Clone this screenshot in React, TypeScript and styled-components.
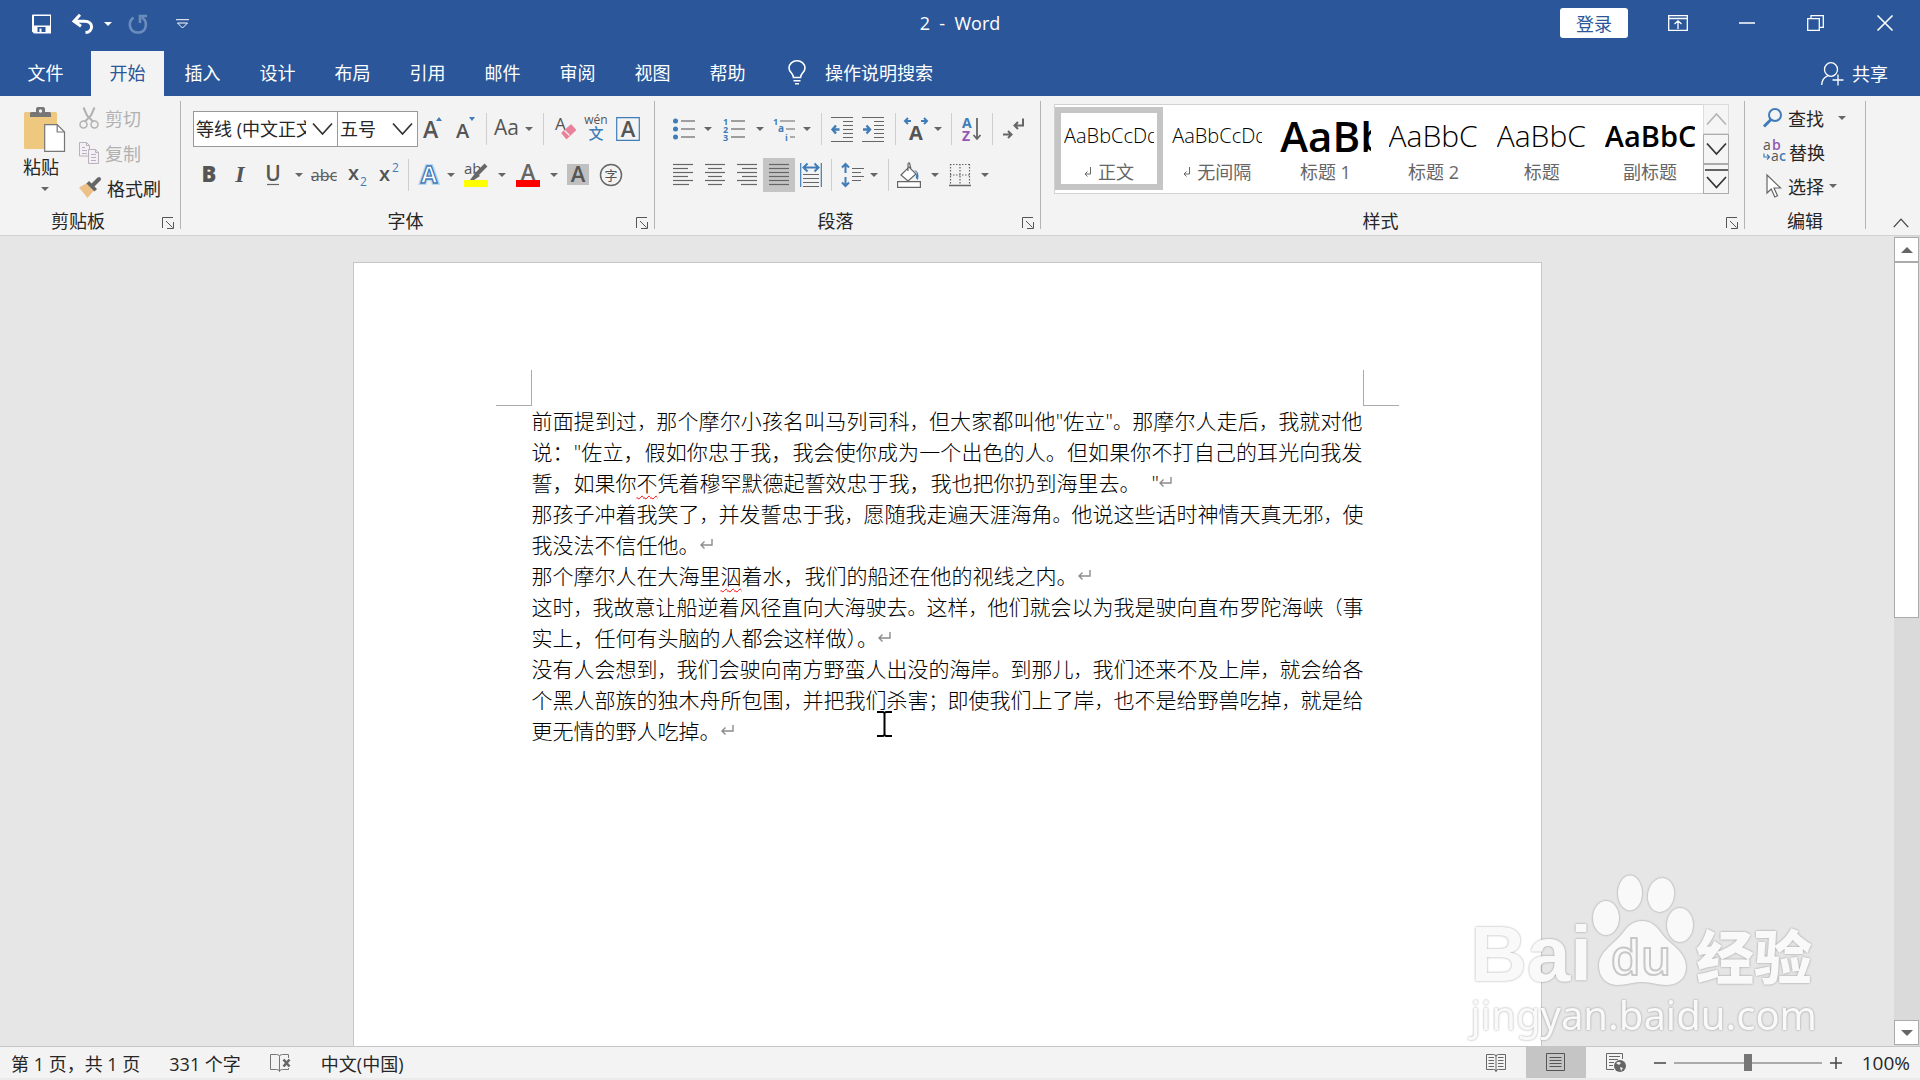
import React from "react";
import styled, { createGlobalStyle } from "styled-components";

const UI_FONT = '"Open Sans", "Noto Sans CJK SC", sans-serif';
const BLUE = "#2b579a";
const ICON = "#666666";
const ACCENT = "#3f7cb8";

const GlobalStyle = createGlobalStyle`
  * { box-sizing: border-box; }
  body { margin: 0; background: #e6e6e6; font-family: ${UI_FONT}; font-size: 18px; color: #262626; }
  button, input, select { font: inherit; color: inherit; }
  button { border: 0; padding: 0; background: none; display: flex; align-items: center; justify-content: center; white-space: nowrap; }
  svg { display: block; flex: none; overflow: visible; }
`;

const Window = styled.div`
  height: 100vh;
  display: flex;
  flex-direction: column;
  overflow: hidden;
`;

/* ---------- title bar and tabs ---------- */

const TitleBar = styled.header`
  display: grid;
  grid-template-columns: 1fr auto 1fr;
  align-items: center;
  height: 46px;
  flex: none;
  background: ${BLUE};
  color: #fff;
`;

const QuickAccess = styled.div`
  display: flex;
  align-items: center;
  padding: 2px 0 0 22px;
`;

const ToolButton = styled.button<{ $w: number }>`
  width: ${(p) => p.$w}px;
  height: 32px;
`;

const Title = styled.h1`
  margin: 0;
  font-size: 18px;
  font-weight: 400;
  line-height: 24px;
  white-space: pre;
`;

const WindowControls = styled.div`
  display: flex;
  justify-content: flex-end;
  align-items: center;
`;

const SignIn = styled.button`
  width: 68px;
  height: 30px;
  margin-right: 15px;
  border-radius: 3px;
  background: #fff;
  color: ${BLUE};
`;

const TabBar = styled.nav`
  display: flex;
  align-items: flex-end;
  height: 50px;
  flex: none;
  padding-right: 32px;
  background: ${BLUE};
  color: #fff;
`;

const Tab = styled.button<{ $active?: boolean; $file?: boolean }>`
  width: ${(p) => (p.$file ? 87 : 73)}px;
  height: 45px;
  margin-left: 2px;
  padding-bottom: 3px;
  color: ${(p) => (p.$active ? BLUE : "#fff")};
  background: ${(p) => (p.$active ? "#f3f3f3" : "transparent")};
`;

const TellMe = styled.label`
  display: flex;
  align-items: center;
  gap: 19px;
  height: 45px;
  margin-left: 24px;
  padding-bottom: 2px;
`;

const TellMeInput = styled.input`
  width: 200px;
  height: 30px;
  padding: 0;
  border: 0;
  outline: 0;
  background: transparent;
  color: #fff;
  &::placeholder { color: #fff; opacity: 1; }
`;

const Share = styled.button`
  gap: 8px;
  height: 45px;
  margin-left: auto;
  padding-bottom: 2px;
`;

/* ---------- ribbon ---------- */

const Ribbon = styled.section`
  display: flex;
  flex: none;
  height: 140px;
  padding: 5px 0 6px;
  background: #f3f3f3;
  border-bottom: 1px solid #d2d2d2;
`;

const Group = styled.section<{ $w?: number }>`
  display: flex;
  flex-direction: column;
  ${(p) => (p.$w ? `width: ${p.$w}px; flex: none;` : "flex: 1; min-width: 0;")}
  border-right: 1px solid #b4b4b4;
`;

const GroupBody = styled.div<{ $pad?: string; $column?: boolean; $gap?: number }>`
  display: flex;
  flex: 1;
  min-width: 0;
  flex-direction: ${(p) => (p.$column ? "column" : "row")};
  align-items: flex-start;
  gap: ${(p) => p.$gap || 0}px;
  padding: ${(p) => p.$pad || 0};
`;

const GroupFooter = styled.footer`
  display: flex;
  align-items: flex-end;
  height: 16px;
  line-height: 16px;
`;

const GroupName = styled.span`
  flex: 1;
  text-align: center;
`;

const LauncherButton = styled.button`
  width: 24px;
`;

const Row = styled.div`
  display: flex;
  align-items: center;
  height: 38px;
`;

const Tool = styled.button<{ $w: number; $on?: boolean }>`
  width: ${(p) => p.$w}px;
  height: 34px;
  flex: none;
  background: ${(p) => (p.$on ? "#c5c5c5" : "transparent")};
`;

const Divider = styled.span<{ $w: number }>`
  display: flex;
  justify-content: center;
  width: ${(p) => p.$w}px;
  flex: none;
  &::before { content: ""; width: 1px; height: 32px; background: #cfcfcf; }
`;

const Paste = styled.button`
  flex-direction: column;
  width: 48px;
  margin-left: 21px;
  padding-top: 6px;
`;

const PasteLabel = styled.span`
  line-height: 24px;
  margin: 2px 8px 8px 0;
`;

const Stack = styled.div`
  display: flex;
  flex-direction: column;
  align-items: flex-start;
  gap: 2px;
  padding-left: 10px;
`;

const Command = styled.button<{ $off?: boolean; $gap?: number }>`
  gap: ${(p) => p.$gap ?? 6}px;
  height: 33px;
  color: ${(p) => (p.$off ? "#b1b1b1" : "#262626")};
`;

const Combo = styled.span<{ $w: number }>`
  position: relative;
  display: block;
  width: ${(p) => p.$w}px;
  height: 36px;
  flex: none;
  & + & { margin-left: -1px; }
  svg { position: absolute; right: 5px; top: 12px; pointer-events: none; }
`;

const Select = styled.select`
  appearance: none;
  width: 100%;
  height: 100%;
  padding: 0 31px 0 2px;
  border: 1px solid #999;
  border-radius: 0;
  background: #fff;
  overflow: hidden;
`;

const Gallery = styled.div`
  display: flex;
  flex: 1;
  min-width: 0;
  height: 90px;
  border: 1px solid #d2d2d2;
  background: #fff;
`;

const Styles = styled.div`
  display: flex;
  flex: 1;
  min-width: 0;
  overflow: hidden;
  padding: 2px 0 3px;
`;

const StyleCard = styled.button<{ $on?: boolean }>`
  flex-direction: column;
  justify-content: flex-start;
  flex: 1 1 0;
  min-width: 0;
  border: 6px solid ${(p) => (p.$on ? "#c5c5c5" : "transparent")};
  padding: 0 3px;
`;

const Preview = styled.span<{ $size: number; $weight: number }>`
  width: 100%;
  height: 46px;
  flex: none;
  overflow: hidden;
  text-align: left;
  line-height: 45px;
  color: #000;
  font-size: ${(p) => p.$size}px;
  font-weight: ${(p) => p.$weight};
`;

const StyleName = styled.span`
  display: flex;
  align-items: center;
  gap: 6px;
  line-height: 26px;
  color: #666;
`;

const GalleryButtons = styled.div`
  display: flex;
  flex-direction: column;
  width: 26px;
  flex: none;
  margin: -1px;
`;

const GalleryButton = styled.button<{ $off?: boolean }>`
  flex: 1;
  border: 1px solid ${(p) => (p.$off ? "#dcdcdc" : "#ababab")};
  background: #f5f5f5;
`;

const RibbonEnd = styled.div`
  display: flex;
  align-items: flex-end;
  justify-content: center;
  width: 54px;
  flex: none;
  padding-left: 16px;
`;

/* ---------- document ---------- */

const Workspace = styled.main`
  position: relative;
  display: flex;
  flex: 1;
  min-height: 0;
`;

const Canvas = styled.div`
  flex: 1;
  display: flex;
  justify-content: center;
  overflow: hidden;
  padding-top: 26px;
`;

const Page = styled.article`
  position: relative;
  width: 1189px;
  flex: none;
  padding: 107px 178px 0;
  border: 1px solid #c6c6c6;
  border-bottom: 0;
  background: #fff;
  color: #000;
  font-size: 21px;
  font-weight: 300;
`;

const Corners = styled.div`
  display: flex;
  justify-content: space-between;
  margin: 0 -36px;
`;

const Corner = styled.span<{ $side: "left" | "right" }>`
  width: 36px;
  height: 36px;
  border-bottom: 1px solid #ababab;
  border-${(p) => (p.$side === "left" ? "right" : "left")}: 1px solid #ababab;
`;

const Paragraph = styled.p`
  margin: 0;
  line-height: 31px;
`;

const Line = styled.span<{ $full?: boolean }>`
  display: block;
  height: 31px;
  white-space: nowrap;
  text-align: ${(p) => (p.$full ? "justify" : "left")};
  text-align-last: ${(p) => (p.$full ? "justify" : "left")};
`;

const Mark = styled.span`
  font-size: 19px;
`;

const Misspelt = styled.span`
  text-decoration: underline wavy #f00 1px;
  text-underline-offset: 4px;
`;

const ReturnMark = styled.svg`
  display: inline-block;
`;

const Pointer = styled.svg`
  position: absolute;
  left: 523px;
  top: 448px;
`;

const Scrollbar = styled.div`
  display: flex;
  flex-direction: column;
  width: 26px;
  flex: none;
  padding: 1px 1px 1px 0;
  background: #dadada;
`;

const ScrollButton = styled.button`
  height: 25px;
  flex: none;
  border: 1px solid #ababab;
  background: #fff;
`;

const ScrollThumb = styled.div`
  flex: 0 0 44%;
  margin-bottom: auto;
  border: 1px solid #ababab;
  background: #fff;
`;

/* ---------- watermark ---------- */

const Watermark = styled.div`
  position: absolute;
  right: 103px;
  bottom: 3px;
  display: flex;
  flex-direction: column;
  align-items: flex-start;
  color: #f9f9f9;
  pointer-events: none;
  filter: drop-shadow(0 0 1px rgba(0, 0, 0, 0.2)) drop-shadow(0 0 1px rgba(0, 0, 0, 0.15));
`;

const Brand = styled.div`
  display: flex;
  align-items: flex-end;
`;

const BrandLatin = styled.span`
  font: bold 78px/66px "Liberation Sans", sans-serif;
`;

const BrandHan = styled.span`
  font: 900 58px/66px "Noto Sans CJK SC", sans-serif;
`;

const BrandUrl = styled.span`
  font: 40px/56px "Noto Sans", sans-serif;
`;

/* ---------- status bar ---------- */

const StatusBar = styled.footer`
  display: flex;
  align-items: stretch;
  height: 34px;
  flex: none;
  padding: 0 10px 0 11px;
  border-top: 1px solid #c6c6c6;
  border-bottom: 2px solid #ebebeb;
  background: #f3f3f3;
`;

const StatusItem = styled.button`
  margin-right: 29px;
`;

const ViewButton = styled.button<{ $on?: boolean }>`
  width: 60px;
  background: ${(p) => (p.$on ? "#c5c5c5" : "transparent")};
`;

const Spacer = styled.span`
  flex: 1;
`;

const ZoomButton = styled.button`
  width: 28px;
`;

const ZoomSlider = styled.input`
  appearance: none;
  align-self: center;
  width: 148px;
  height: 20px;
  margin: 0;
  background: linear-gradient(#ababab, #ababab) center / 100% 2px no-repeat;
  &::-webkit-slider-thumb {
    appearance: none;
    width: 8px;
    height: 17px;
    background: #767676;
  }
`;

const ZoomValue = styled.button`
  width: 60px;
  justify-content: flex-end;
  font-size: 19px;
`;

/* ---------- icons ---------- */

const Caret = ({ color = ICON }: { color?: string }) => (
  <svg width="8" height="4" viewBox="0 0 8 4"><path d="M0 0h8L4 4z" fill={color} /></svg>
);

const CaretTool = ({ w, label }: { w: number; label: string }) => (
  <Tool $w={w} aria-label={label}><Caret /></Tool>
);

const Chevron = ({ up, color = "#333", w = 21 }: { up?: boolean; color?: string; w?: number }) => (
  <svg width={w} height="12" viewBox="0 0 21 12" fill="none" stroke={color} strokeWidth="1.7">
    <path d={up ? "M1 11.500 10.500 1 20 11.500" : "M1 .5 10.500 11 20 .5"} />
  </svg>
);

const Launcher = () => (
  <LauncherButton aria-label="更多设置">
    <svg width="12" height="12" viewBox="0 0 12 12" fill="none" stroke="#555">
      <path d="M.5 11V.5H11M4 4l6.500 6.500M11.500 5v6.500H5" />
    </svg>
  </LauncherButton>
);

type GlyphProps = { w: number; h?: number; children: React.ReactNode };
const Glyph = ({ w, h = 26, children }: GlyphProps) => (
  <svg width={w} height={h} viewBox={`0 0 ${w} ${h}`} fill="none" stroke={ICON} strokeWidth="1.200" fontFamily={UI_FONT}>
    {children}
  </svg>
);

const T = (p: React.SVGProps<SVGTextElement>) => <text stroke="none" fill="#555" {...p} />;

const SaveIcon = () => (
  <svg width="20" height="20" viewBox="0 0 20 20">
    <path fill="#fff" fillRule="evenodd" d="M0 1.500Q0 .5 1 .5h18v19H2l-2-2zM2 2v9.500h16V2zM5.500 13v5h2v-3.500h2V18h4v-5z" />
  </svg>
);
const UndoIcon = () => (
  <svg width="22" height="20" viewBox="0 0 22 20" fill="none" stroke="#fff" strokeWidth="3">
    <path d="M8 .8 2 7.200l7 5M2.500 7.200h10c9.500 0 9 11 1 11.300" />
  </svg>
);
const RedoIcon = () => (
  <svg width="20" height="20" viewBox="0 0 20 20" fill="none" stroke="#6c8cbd" strokeWidth="2.600">
    <path d="M5.500 3.500C-1 8.500 1.500 18.500 10 18.500S20.500 8 14 3.500M12 9V2h7" />
  </svg>
);
const CustomizeIcon = () => (
  <svg width="13" height="10" viewBox="0 0 13 10" fill="none" stroke="#fff"><path d="M0 .7h13M1.500 4h10l-5 5z" /></svg>
);
const BulbIcon = () => (
  <svg width="18" height="25" viewBox="0 0 18 25" fill="none" stroke="#fff" strokeWidth="1.600">
    <path d="M5.500 17.500C5.500 13 1 12.500 1 8a8 7.300 0 0 1 16 0c0 4.500-4.500 5-4.500 9.500zM5.500 20.700h7M7 23.800h4" />
  </svg>
);
const ShareIcon = () => (
  <svg width="23" height="24" viewBox="0 0 23 22" fill="none" stroke="#fff" strokeWidth="1.300">
    <ellipse cx="10" cy="7.500" rx="6.500" ry="6.800" /><path d="M.7 23c.3-5 2.500-8 6-9.200M17 12.500v11M11.500 18h11" />
  </svg>
);
const RibbonIcon = () => (
  <svg width="20" height="16" viewBox="0 0 20 16" fill="none" stroke="#fff" strokeWidth="1.300">
    <path d="M.7.7h18.600v14.600H.7zM.7 3.500h18.600M10 14V6M6.500 9 10 5.800 13.500 9" />
  </svg>
);
const MinimizeIcon = () => <svg width="16" height="2"><path d="M0 1h16" stroke="#fff" strokeWidth="1.500" /></svg>;
const RestoreIcon = () => (
  <svg width="17" height="16" viewBox="0 0 17 16" fill="none" stroke="#fff" strokeWidth="1.300">
    <path d="M.7 3.700h11.600v11.600H.7zM4 3.500V.7h12.300v11.600h-3.500" />
  </svg>
);
const CloseIcon = () => (
  <svg width="16" height="16" viewBox="0 0 16 16" stroke="#fff" strokeWidth="1.600"><path d="M.5.5l15 15M15.500.5l-15 15" /></svg>
);
const PasteIcon = () => (
  <svg width="42" height="46" viewBox="0 0 42 46">
    <rect y="5" width="33" height="37" rx="1.500" fill="#edc87e" />
    <path d="M6 10V6.500q0-1.500 1.500-1.500H12V2q0-2 2-2h5q2 0 2 2v3h4.500Q27 5 27 6.500V10z" fill="#767676" />
    <circle cx="16.500" cy="4" r="1.700" fill="#f3f3f3" />
    <path d="M20.700 17.700h12.500l7.300 7.300v19.300H20.700z" fill="#fff" stroke="#767676" strokeWidth="1.200" />
    <path d="M33.200 17.700V25h7.300" fill="none" stroke="#767676" strokeWidth="1.200" />
  </svg>
);
const CutIcon = () => (
  <svg width="20" height="22" viewBox="0 0 20 22" fill="none" stroke="#b1b1b1" strokeWidth="2">
    <path d="M4.500.5 8 8.500l6 6M15.500.5 12 8.500l-6 6" /><circle cx="4.500" cy="17.500" r="3.500" strokeWidth="1.500" /><circle cx="15.500" cy="17.500" r="3.500" strokeWidth="1.500" />
  </svg>
);
const CopyIcon = () => (
  <svg width="20" height="22" viewBox="0 0 20 22" fill="#f3f0f5" stroke="#b9b2bd">
    <path d="M.5.5h7l3 3v10.500H.5zM7.500.5v3h3M3 5.500h3M3 8.500h5M3 11.500h5" />
    <path d="M9.500 7.500h7l3 3v11h-10zM16.500 7.500v3h3M12 12.500h5M12 15.500h5M12 18.500h5" />
  </svg>
);
const BrushIcon = () => (
  <svg width="22" height="20" viewBox="0 0 22 20">
    <path d="M0 9.500 8 5l7 7.500L8.500 20z" fill="#edc087" /><path d="M7.500 5.500 10 3l8 8-2.500 2.500z" fill="#666" />
    <path d="m14 7 6-6" stroke="#666" strokeWidth="4" strokeLinecap="round" />
  </svg>
);

const AlignIcon = ({ rows }: { rows: number[][] }) => (
  <Glyph w={20} h={24}>
    {rows.map(([a, b], i) => <path key={i} d={`M${a} ${1 + i * 4}.500H${b}`} />)}
  </Glyph>
);

const Arrow = ({ x, y, flip }: { x: number; y: number; flip?: boolean }) => (
  <path transform={`translate(${x} ${y}) scale(${flip ? -1 : 1} 1)`} d="M0 0h7M3.500-4 0 0l3.500 4" stroke={ACCENT} strokeWidth="2.400" />
);

const FindIcon = () => (
  <svg width="20" height="20" viewBox="0 0 20 20" fill="none" stroke={ACCENT}>
    <circle cx="12" cy="7" r="6" strokeWidth="2" /><path d="M8 11.500 1 18.500" strokeWidth="3" />
  </svg>
);
const ReplaceIcon = () => (
  <Glyph w={23} h={24}>
    <T x="0" y="10" fontSize="14">a</T><T x="9" y="10" fontSize="14" fill="#9457b5" fontWeight="600">b</T>
    <T x="8" y="21" fontSize="14">a</T><T x="16" y="21" fontSize="14" fill={ACCENT} fontWeight="600">c</T>
    <path d="M1 13.500v3.500h5M4 14.500l2.500 2.500L4 19.500" stroke={ACCENT} />
  </Glyph>
);
const SelectIcon = () => (
  <svg width="20" height="24" viewBox="0 0 20 24" fill="#fff" stroke="#666" strokeWidth="1.200">
    <path d="M4 1v18l4.200-4 3.600 8 2.700-1.300L11 14h6.500z" />
  </svg>
);
const ReadIcon = () => (
  <svg width="20" height="19" viewBox="0 0 20 19" fill="none" stroke="#666">
    <path d="M.5 1.500h7q2.500 0 2.500 2 0-2 2.500-2h7v15h-7q-2.500 0-2.500 2 0-2-2.500-2h-7zM10 3.500v15M2.500 4.500H8M2.500 7.500H8M2.500 10.500H8M2.500 13.500H8M12 4.500h5.500M12 7.500h5.500M12 10.500h5.500M12 13.500h5.500" />
  </svg>
);
const PrintIcon = () => (
  <svg width="20" height="19" viewBox="0 0 20 19" fill="none" stroke="#555">
    <path d="M.5.5h18v17H.5zM3.500 4.500h12M3.500 7.500h12M3.500 10.500h12M3.500 13.500h12" />
  </svg>
);
const WebIcon = () => (
  <svg width="20" height="19" viewBox="0 0 20 19" fill="none" stroke="#666">
    <path d="M8 16.500H.5V.5h16V6M3 3.500h11M3 6.500h9M3 9.500h5M3 12.500h4" />
    <circle cx="14" cy="13" r="6" fill="#666" stroke="none" />
    <path d="M10 10q3-2 5 0l-2 2zM14 14l3 1-2 3zM17 9l2 3" fill="#f3f3f3" stroke="none" />
  </svg>
);
const ProofIcon = () => (
  <svg width="22" height="18" viewBox="0 0 22 18" fill="none" stroke="#767676">
    <path d="M18.500 4V.5h-6q-3 0-3 2 0-2-3-2h-6v15h6q3 0 3 2V2.500M9.500 17.500q0-2 3-2h6V14" />
    <path d="m13.500 5.500 6 7M19.500 5.500l-6 7" strokeWidth="2.600" stroke="#666" />
  </svg>
);
const StyleReturn = () => (
  <svg width="8" height="10" viewBox="0 0 8 10" fill="none" stroke="#666"><path d="M6.500 0v7H1M3.500 4.500 1 7l2.500 2.500" /></svg>
);
const Return = () => (
  <ReturnMark width="13" height="14" viewBox="0 0 13 14" fill="none" stroke="#8c8c8c" strokeWidth="1.400" aria-hidden>
    <path d="M12 0v6H1M4.500 2.500 1 6l3.500 3.500" />
  </ReturnMark>
);

/* ---------- ribbon groups ---------- */

const ClipboardGroup = () => (
  <Group $w={181}>
    <GroupBody>
      <Paste>
        <PasteIcon />
        <PasteLabel>粘贴</PasteLabel>
        <Caret />
      </Paste>
      <Stack>
        <Command $off><CutIcon />剪切</Command>
        <Command $off><CopyIcon />复制</Command>
        <Command><BrushIcon />格式刷</Command>
      </Stack>
    </GroupBody>
    <GroupFooter><GroupName>剪贴板</GroupName><Launcher /></GroupFooter>
  </Group>
);

const FontGroup = () => (
  <Group $w={474}>
    <GroupBody $column $gap={8} $pad="9px 0 0 12px">
      <Row>
        <Combo $w={145}>
          <Select aria-label="字体"><option>等线 (中文正文)</option></Select><Chevron />
        </Combo>
        <Combo $w={81}>
          <Select aria-label="字号"><option>五号</option></Select><Chevron />
        </Combo>
        <Tool $w={32} aria-label="增大字号">
          <Glyph w={22}><T x="0" y="22" fontSize="23" fontWeight="600">A</T><path d="m13 5 3-4 3 4z" fill={ACCENT} stroke="none" /></Glyph>
        </Tool>
        <Tool $w={32} aria-label="减小字号">
          <Glyph w={22}><T x="1" y="22" fontSize="20" fontWeight="600">A</T><path d="m14 1 3 4 3-4z" fill={ACCENT} stroke="none" /></Glyph>
        </Tool>
        <Divider $w={8} />
        <Tool $w={34} aria-label="更改大小写"><Glyph w={26}><T x="0" y="19" fontSize="21">Aa</T></Glyph></Tool>
        <CaretTool w={10} label="大小写选项" />
        <Divider $w={18} />
        <Tool $w={28} aria-label="清除格式">
          <Glyph w={22}>
            <T x="0" y="14" fontSize="17">A</T>
            <path d="m7 17 9-8 4.500 5-9 8.500z" fill="#e8829a" stroke="#e8829a" strokeLinejoin="round" />
            <path d="m9.500 14.500 5 5" stroke="#f3f3f3" />
          </Glyph>
        </Tool>
        <Tool $w={32} aria-label="拼音指南">
          <Glyph w={24} h={30}>
            <T x="12" y="10" fontSize="12" textAnchor="middle">wén</T>
            <T x="12" y="25" fontSize="15" textAnchor="middle" fill={ACCENT} fontWeight="500">文</T>
          </Glyph>
        </Tool>
        <Tool $w={32} aria-label="字符边框">
          <Glyph w={24}><path d="M.7 1.700h22.600v22.600H.7z" stroke={ACCENT} /><T x="12" y="21" fontSize="22" fontWeight="600" textAnchor="middle">A</T></Glyph>
        </Tool>
      </Row>
      <Row>
        <Tool $w={31} aria-label="加粗"><Glyph w={20}><T x="10" y="20" fontSize="22" fontWeight="800" textAnchor="middle">B</T></Glyph></Tool>
        <Tool $w={32} aria-label="倾斜"><Glyph w={20}><T x="10" y="20" fontSize="24" fontWeight="600" fontStyle="italic" fontFamily="Liberation Serif" textAnchor="middle">I</T></Glyph></Tool>
        <Tool $w={34} aria-label="下划线"><Glyph w={20}><T x="10" y="19" fontSize="21" fontWeight="600" textAnchor="middle">U</T><path d="M4 22.500h12" /></Glyph></Tool>
        <CaretTool w={17} label="下划线选项" />
        <Tool $w={34} aria-label="删除线"><Glyph w={26}><T x="13" y="19" fontSize="16" textAnchor="middle">abc</T><path d="M0 14.500h26" /></Glyph></Tool>
        <Tool $w={32} aria-label="下标"><Glyph w={22}><T x="2" y="18" fontSize="20" fontWeight="600">x</T><T x="14" y="24" fontSize="12" fill={ACCENT}>2</T></Glyph></Tool>
        <Tool $w={32} aria-label="上标"><Glyph w={22}><T x="1" y="19" fontSize="20" fontWeight="600">x</T><T x="14" y="10" fontSize="12" fill={ACCENT}>2</T></Glyph></Tool>
        <Divider $w={7} />
        <Tool $w={34} aria-label="文本效果">
          <Glyph w={24}>
            <T x="12" y="21" fontSize="24" fontWeight="700" textAnchor="middle" fill="none" stroke="#b9d6f2" strokeWidth="4">A</T>
            <T x="12" y="21" fontSize="24" fontWeight="700" textAnchor="middle" fill="#fff" stroke={ACCENT} strokeWidth="1.300">A</T>
          </Glyph>
        </Tool>
        <CaretTool w={10} label="文本效果选项" />
        <Tool $w={40} aria-label="突出显示">
          <Glyph w={24}>
            <T x="0" y="12" fontSize="15">ab</T><path d="m22 3-9 9" strokeWidth="4" /><path d="m12 10 4 4-6 4H6z" fill={ICON} stroke="none" />
            <path d="M0 18h24v7H0z" fill="#ff0" stroke="none" />
          </Glyph>
        </Tool>
        <CaretTool w={12} label="突出显示选项" />
        <Tool $w={40} aria-label="字体颜色">
          <Glyph w={24}><T x="12" y="18" fontSize="22" fontWeight="600" textAnchor="middle" fill={ICON}>A</T><path d="M0 18h24v7H0z" fill="#f00" stroke="none" /></Glyph>
        </Tool>
        <CaretTool w={12} label="字体颜色选项" />
        <Tool $w={36} aria-label="字符底纹">
          <Glyph w={22}><path d="M0 2h22v21H0z" fill="#c0c0c0" stroke="none" /><T x="11" y="20" fontSize="22" fontWeight="600" textAnchor="middle">A</T></Glyph>
        </Tool>
        <Tool $w={30} aria-label="带圈字符">
          <Glyph w={24}><circle cx="12" cy="13" r="10.500" strokeWidth="1.500" /><T x="12" y="18" fontSize="13" textAnchor="middle">字</T></Glyph>
        </Tool>
      </Row>
    </GroupBody>
    <GroupFooter><GroupName>字体</GroupName><Launcher /></GroupFooter>
  </Group>
);

const ALIGN_LEFT = [[0, 20], [0, 15], [0, 20], [0, 15], [0, 20], [0, 16]];
const ALIGN_CENTER = [[0, 20], [3, 17], [0, 20], [3, 17], [0, 20], [3, 17]];
const ALIGN_RIGHT = [[0, 20], [5, 20], [0, 20], [5, 20], [0, 20], [4, 20]];
const ALIGN_BOTH = [[0, 20], [0, 20], [0, 20], [0, 20], [0, 20], [0, 20]];

const ParagraphGroup = () => (
  <Group $w={386}>
    <GroupBody $column $gap={8} $pad="9px 0 0 12px">
      <Row>
        <Tool $w={34} aria-label="项目符号">
          <Glyph w={22} h={24}>
            {[4, 12, 20].map((y) => (<React.Fragment key={y}><circle cx="2.500" cy={y} r="2.500" fill={ACCENT} stroke="none" /><path d={`M8 ${y}h14`} /></React.Fragment>))}
          </Glyph>
        </Tool>
        <CaretTool w={14} label="项目符号选项" />
        <Tool $w={38} aria-label="编号">
          <Glyph w={22} h={24}>
            {[4, 12, 20].map((y, i) => (<React.Fragment key={y}><T x="0" y={y + 4} fontSize="9" fill={ACCENT} fontWeight="700">{i + 1}</T><path d={`M8 ${y}h14`} /></React.Fragment>))}
          </Glyph>
        </Tool>
        <CaretTool w={14} label="编号选项" />
        <Tool $w={34} aria-label="多级列表">
          <Glyph w={22} h={24}>
            <T x="0" y="8" fontSize="9" fill={ACCENT} fontWeight="700">1</T><T x="5" y="15" fontSize="10" fill={ACCENT} fontWeight="700">a</T><T x="12" y="24" fontSize="9" fill={ACCENT} fontWeight="700">i</T>
            <path d="M7 4h15M13 12h9M17 20h5" />
          </Glyph>
        </Tool>
        <CaretTool w={12} label="多级列表选项" />
        <Divider $w={16} />
        <Tool $w={26} aria-label="减少缩进量">
          <Glyph w={22} h={24}><path d="M0 .5h22M12 4.500h10M12 8.500h10M12 12.500h10M12 16.500h10M12 20.500h10M0 24.500h22" /><Arrow x={1.5} y={12.5} /></Glyph>
        </Tool>
        <Tool $w={36} aria-label="增加缩进量">
          <Glyph w={22} h={24}><path d="M0 .5h22M12 4.500h10M12 8.500h10M12 12.500h10M12 16.500h10M12 20.500h10M0 24.500h22" /><Arrow x={8} y={12.5} flip /></Glyph>
        </Tool>
        <Divider $w={8} />
        <Tool $w={34} aria-label="中文版式">
          <Glyph w={24}>
            <T x="12" y="24" fontSize="20" fontWeight="700" textAnchor="middle">A</T>
            <path d="M1 5h6M4 2 1 5l3 3M23 5h-6M20 2l3 3-3 3" stroke={ACCENT} strokeWidth="2" />
          </Glyph>
        </Tool>
        <CaretTool w={10} label="中文版式选项" />
        <Divider $w={16} />
        <Tool $w={26} aria-label="排序">
          <Glyph w={20}>
            <T x="0" y="12" fontSize="14" fontWeight="700" fill={ACCENT}>A</T><T x="0" y="25" fontSize="14" fontWeight="700" fill="#9457b5">Z</T>
            <path d="M15 2v21M11.500 19l3.500 4 3.500-4" strokeWidth="1.800" />
          </Glyph>
        </Tool>
        <Divider $w={14} />
        <Tool $w={30} aria-label="显示编辑标记">
          <Glyph w={22}><path d="M20 2.500v7h-8M15 6l-3.500 3.500L15 13M0 18.500h8M5 15l3.500 3.500L5 22" strokeWidth="2" /></Glyph>
        </Tool>
      </Row>
      <Row>
        <Tool $w={32} aria-label="左对齐"><AlignIcon rows={ALIGN_LEFT} /></Tool>
        <Tool $w={32} aria-label="居中"><AlignIcon rows={ALIGN_CENTER} /></Tool>
        <Tool $w={32} aria-label="右对齐"><AlignIcon rows={ALIGN_RIGHT} /></Tool>
        <Tool $w={32} $on aria-label="两端对齐"><AlignIcon rows={ALIGN_BOTH} /></Tool>
        <Tool $w={32} aria-label="分散对齐">
          <Glyph w={22}><path d="M.7 1v24M21.300 1v24" stroke={ACCENT} /><path d="M3 12.500h16M3 16.500h16M3 20.500h16M3 24.500h16" /><path d="M3.500 5.500h15M7.500 1.500l-4 4 4 4M14.500 1.500l4 4-4 4" stroke={ACCENT} strokeWidth="2" /></Glyph>
        </Tool>
        <Divider $w={8} />
        <Tool $w={34} aria-label="行距">
          <Glyph w={23}><path d="M11 6.500h12M11 10.500h9M11 14.500h12M11 18.500h9" /><path d="M4.500 2v9M1 5.500 4.500 2 8 5.500M4.500 15v9M1 20.500 4.500 24 8 20.500" stroke={ACCENT} strokeWidth="2" /></Glyph>
        </Tool>
        <CaretTool w={10} label="行距选项" />
        <Divider $w={18} />
        <Tool $w={24} aria-label="底纹">
          <Glyph w={24}>
            <path d="m4 13 8-8 7 7-8 7zM11 9V2.500q0-2 1.500-1.500L14 7" fill="#fff" /><path d="M17 8q6 1 4 10-4-2-1-7z" fill={ACCENT} stroke="none" />
            <path d="M.6 19.600h22.800v5.800H.6z" fill="#fff" />
          </Glyph>
        </Tool>
        <CaretTool w={28} label="底纹选项" />
        <Tool $w={22} aria-label="边框">
          <Glyph w={22}><path d="M1 2.500h20M1 13h20M1.500 2v21M11 2v21M20.500 2v21" strokeDasharray="1.500 1.500" /><path d="M0 23.500h22" strokeWidth="1.500" /></Glyph>
        </Tool>
        <CaretTool w={28} label="边框选项" />
      </Row>
    </GroupBody>
    <GroupFooter><GroupName>段落</GroupName><Launcher /></GroupFooter>
  </Group>
);

const STYLES = [
  { name: "正文", text: "AaBbCcDd", size: 20, weight: 300, mark: true, on: true },
  { name: "无间隔", text: "AaBbCcDd", size: 20, weight: 300, mark: true },
  { name: "标题 1", text: "AaBb", size: 42, weight: 600 },
  { name: "标题 2", text: "AaBbC", size: 30, weight: 300 },
  { name: "标题", text: "AaBbC", size: 30, weight: 300 },
  { name: "副标题", text: "AaBbC", size: 29, weight: 600 },
];

const StylesGroup = () => (
  <Group>
    <GroupBody $pad="3px 15px 0 13px">
      <Gallery>
        <Styles>
          {STYLES.map((s) => (
            <StyleCard key={s.name} $on={s.on}>
              <Preview $size={s.size} $weight={s.weight}>{s.text}</Preview>
              <StyleName>{s.mark && <StyleReturn />}{s.name}</StyleName>
            </StyleCard>
          ))}
        </Styles>
        <GalleryButtons>
          <GalleryButton $off aria-label="上一行"><Chevron up color="#b5b5b5" /></GalleryButton>
          <GalleryButton aria-label="下一行"><Chevron /></GalleryButton>
          <GalleryButton aria-label="其他样式">
            <svg width="23" height="20" viewBox="0 0 23 20" fill="none" stroke="#333" strokeWidth="1.700"><path d="M0 1h23M2 8l9.500 10.500L21 8" /></svg>
          </GalleryButton>
        </GalleryButtons>
      </Gallery>
    </GroupBody>
    <GroupFooter><GroupName>样式</GroupName><Launcher /></GroupFooter>
  </Group>
);

const FindCaret = styled.span`
  padding-left: 9px;
`;

const EditingGroup = () => (
  <Group $w={121}>
    <GroupBody $column $gap={1} $pad="0 0 0 18px">
      <Command $gap={5}><FindIcon /><span>查找</span><FindCaret><Caret /></FindCaret></Command>
      <Command $gap={3}><ReplaceIcon /><span>替换</span></Command>
      <Command $gap={5}><SelectIcon /><span>选择</span><Caret /></Command>
    </GroupBody>
    <GroupFooter><GroupName>编辑</GroupName></GroupFooter>
  </Group>
);

/* ---------- document text ---------- */

const PUNCTUATION = /([，。；（：])/;

/** A full line whose punctuation is set tighter so that forty characters fit the measure. */
const TightLine = ({ text }: { text: string }) => (
  <Line $full>
    {text.split(PUNCTUATION).map((part, i) => (PUNCTUATION.test(part) ? <Mark key={i}>{part}</Mark> : part))}
  </Line>
);

const Document = () => (
  <Page>
    <Corners><Corner $side="left" /><Corner $side="right" /></Corners>
    <Paragraph>
      <TightLine text={'前面提到过，那个摩尔小孩名叫马列司科，但大家都叫他"佐立"。那摩尔人走后，我就对他'} />
      <Line $full>说："佐立，假如你忠于我，我会使你成为一个出色的人。但如果你不打自己的耳光向我发</Line>
      <Line>誓，如果你<Misspelt>不</Misspelt>凭着穆罕默德起誓效忠于我，我也把你扔到海里去。&nbsp;&nbsp;"<Return /></Line>
    </Paragraph>
    <Paragraph>
      <TightLine text="那孩子冲着我笑了，并发誓忠于我，愿随我走遍天涯海角。他说这些话时神情天真无邪，使" />
      <Line>我没法不信任他。<Return /></Line>
    </Paragraph>
    <Paragraph>
      <Line>那个摩尔人在大海里<Misspelt>泅</Misspelt>着水，我们的船还在他的视线之内。<Return /></Line>
    </Paragraph>
    <Paragraph>
      <TightLine text="这时，我故意让船逆着风径直向大海驶去。这样，他们就会以为我是驶向直布罗陀海峡（事" />
      <Line>实上，任何有头脑的人都会这样做）。<Return /></Line>
    </Paragraph>
    <Paragraph>
      <TightLine text="没有人会想到，我们会驶向南方野蛮人出没的海岸。到那儿，我们还来不及上岸，就会给各" />
      <TightLine text="个黑人部族的独木舟所包围，并把我们杀害；即使我们上了岸，也不是给野兽吃掉，就是给" />
      <Line>更无情的野人吃掉。<Return /></Line>
    </Paragraph>
    <Pointer width="15" height="26" viewBox="0 0 15 26" fill="none" stroke="#000" strokeWidth="2" aria-hidden>
      <path d="M0 1h6l1.500 1L9 1h6M7.500 2v22M0 25h6l1.500-1L9 25h6" />
    </Pointer>
  </Page>
);

const BaiduWatermark = () => (
  <Watermark aria-hidden>
    <Brand>
      <BrandLatin>Bai</BrandLatin>
      <svg width="104" height="114" viewBox="0 0 104 114" fill="currentColor">
        <ellipse cx="14" cy="45" rx="13" ry="17" /><ellipse cx="38" cy="20" rx="12" ry="17.500" />
        <ellipse cx="69" cy="22" rx="13" ry="17" transform="rotate(10 69 22)" /><ellipse cx="88" cy="52" rx="13" ry="17" />
        <path d="M50 48c10 0 15 6 20 13 8 11 24 17 24 33 0 12-9 18-20 18-10 0-14-3-24-3s-14 3-24 3C15 112 7 105 7 93c0-14 14-21 23-32 6-8 11-13 20-13z" />
        <text x="49" y="102" textAnchor="middle" fontFamily="Open Sans" fontWeight="600" fontSize="48" fill="#f9f9f9" stroke="#c8c8c8" strokeWidth="2">du</text>
      </svg>
      <BrandHan>经验</BrandHan>
    </Brand>
    <BrandUrl>jingyan.baidu.com</BrandUrl>
  </Watermark>
);

const TABS = ["插入", "设计", "布局", "引用", "邮件", "审阅", "视图", "帮助"];

export default function App() {
  return (
    <Window>
      <GlobalStyle />
      <TitleBar>
        <QuickAccess>
          <ToolButton $w={40} aria-label="保存"><SaveIcon /></ToolButton>
          <ToolButton $w={42} aria-label="撤消"><UndoIcon /></ToolButton>
          <ToolButton $w={8} aria-label="撤消选项"><Caret color="#fff" /></ToolButton>
          <ToolButton $w={52} aria-label="重复"><RedoIcon /></ToolButton>
          <ToolButton $w={36} aria-label="自定义快速访问工具栏"><CustomizeIcon /></ToolButton>
        </QuickAccess>
        <Title>{"2  -  Word"}</Title>
        <WindowControls>
          <SignIn>登录</SignIn>
          <ToolButton $w={69} aria-label="功能区显示选项"><RibbonIcon /></ToolButton>
          <ToolButton $w={69} aria-label="最小化"><MinimizeIcon /></ToolButton>
          <ToolButton $w={69} aria-label="还原"><RestoreIcon /></ToolButton>
          <ToolButton $w={70} aria-label="关闭"><CloseIcon /></ToolButton>
        </WindowControls>
      </TitleBar>
      <TabBar>
        <Tab $file>文件</Tab>
        <Tab $active>开始</Tab>
        {TABS.map((t) => <Tab key={t}>{t}</Tab>)}
        <TellMe><BulbIcon /><TellMeInput type="text" placeholder="操作说明搜索" /></TellMe>
        <Share><ShareIcon />共享</Share>
      </TabBar>
      <Ribbon>
        <ClipboardGroup />
        <FontGroup />
        <ParagraphGroup />
        <StylesGroup />
        <EditingGroup />
        <RibbonEnd><button aria-label="折叠功能区"><Chevron up color="#444" w={16} /></button></RibbonEnd>
      </Ribbon>
      <Workspace>
        <Canvas><Document /></Canvas>
        <Scrollbar>
          <ScrollButton aria-label="向上滚动"><svg width="12" height="6"><path d="M0 6h12L6 0z" fill={ICON} /></svg></ScrollButton>
          <ScrollThumb />
          <ScrollButton aria-label="向下滚动"><svg width="12" height="6"><path d="M0 0h12L6 6z" fill={ICON} /></svg></ScrollButton>
        </Scrollbar>
        <BaiduWatermark />
      </Workspace>
      <StatusBar>
        <StatusItem>第 1 页，共 1 页</StatusItem>
        <StatusItem>331 个字</StatusItem>
        <StatusItem aria-label="校对"><ProofIcon /></StatusItem>
        <StatusItem>中文(中国)</StatusItem>
        <Spacer />
        <ViewButton aria-label="阅读视图"><ReadIcon /></ViewButton>
        <ViewButton $on aria-label="页面视图"><PrintIcon /></ViewButton>
        <ViewButton aria-label="Web 版式视图"><WebIcon /></ViewButton>
        <ZoomButton aria-label="缩小"><svg width="12" height="2"><path d="M0 1h12" stroke="#444" strokeWidth="1.500" /></svg></ZoomButton>
        <ZoomSlider type="range" min="10" max="190" defaultValue="100" aria-label="显示比例" />
        <ZoomButton aria-label="放大"><svg width="12" height="12"><path d="M0 6h12M6 0v12" stroke="#444" strokeWidth="1.500" /></svg></ZoomButton>
        <ZoomValue>100%</ZoomValue>
      </StatusBar>
    </Window>
  );
}
